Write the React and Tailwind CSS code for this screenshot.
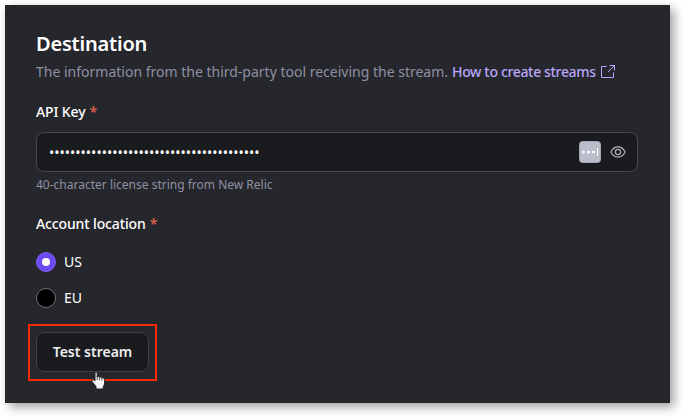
import React from "react";

function Label({ children, className }) {
  return (
    <div className={`flex h-5 gap-1 whitespace-nowrap text-sm leading-5 font-medium text-white ${className}`}>
      <span className="tracking-[-0.13px]">{children}</span>
      <span className="text-[#e2604f]">*</span>
    </div>
  );
}

function Radio({ label, checked, className }) {
  return (
    <div className={`flex h-5 items-center gap-2 ${className}`}>
      <span
        className={`flex size-5 items-center justify-center rounded-full border ${
          checked ? "border-[#7a5cf5] bg-[#6c4bf0]" : "border-[#70707c] bg-black"
        }`}
      >
        {checked && <span className="size-2 rounded-full bg-white" />}
      </span>
      <span className="text-sm leading-5 text-white">{label}</span>
    </div>
  );
}

function ExternalIcon() {
  return (
    <svg width="14" height="14" viewBox="0 0 14 14" fill="none" stroke="#b9a6fb" className="-mt-px shrink-0">
      <path d="M5.5 1.5H.5V12.5H12.5V7.5M7 7L13 1M8.5 .5H13.5V5.5" />
    </svg>
  );
}

function EyeIcon() {
  return (
    <svg width="16" height="12" viewBox="0 0 16 12" fill="none" stroke="#b4b4bd" strokeWidth="1.1">
      <path d="M.9 6C2.6 2.5 5 .9 8 .9S13.4 2.5 15.1 6C13.4 9.5 11 11.1 8 11.1S2.6 9.5 .9 6Z" />
      <circle cx="8" cy="6" r="2.6" />
    </svg>
  );
}

function ManagerIcon() {
  return (
    <svg width="22" height="22" viewBox="0 0 22 22">
      <rect x=".5" y=".5" width="21" height="21" rx="3" fill="#bcbdca" stroke="#a5a6b3" />
      <g fill="#fff">
        <circle cx="4.5" cy="11" r="1.5" />
        <circle cx="9.5" cy="11" r="1.5" />
        <circle cx="14.5" cy="11" r="1.5" />
        <rect x="18" y="7" width="1" height="8" />
      </g>
    </svg>
  );
}

function Pointer() {
  return (
    <svg width="15" height="19" viewBox="0 0 15 19" className="absolute left-[55px] top-[39px]">
      <path
        d="M4 2C4 .7 6.2 .7 6.2 2V6C6.8 5 8.3 5.3 8.5 6.4C9.2 5.6 10.7 5.9 10.9 7.1C11.8 6.6 13.6 7.1 13.6 8.5V13L12.2 15.8V18H5V15.6L1.1 10.6C.2 9.3 1.7 8.1 2.9 9L4 10Z"
        fill="#f5f5f6"
        stroke="#202126"
        strokeWidth="1"
      />
      <path d="M6.2 5.5V9M8.6 6.5V9.3M10.9 7.3V9.6" stroke="#202126" strokeWidth=".8" />
    </svg>
  );
}

export default function App() {
  return (
    <div className="h-[418px] w-[685px] overflow-hidden bg-white p-[5px] font-['Noto_Sans',sans-serif]">
      <main className="h-[398px] w-[665px] bg-[#26272c] pt-[25px] pr-8 pl-[31px] shadow-[4px_4px_10px_rgba(0,0,0,0.38)]">
        <h1 className="h-7 text-xl leading-7 font-semibold tracking-[-0.2px] text-white">Destination</h1>
        <div className="mt-1 flex h-5 items-center whitespace-nowrap text-sm leading-5 text-[#8e90a3]">
          <span>The information from the third-party tool receiving the stream.</span>
          <a className="ml-1 mr-[5px] w-36 font-medium tracking-[-0.34px] text-[#b9a6fb]">How to create streams</a>
          <ExternalIcon />
        </div>

        <Label className="mt-5">API Key</Label>
        <div className="mt-2.5 flex h-10 items-center rounded-lg border border-[#474852] bg-[#1a1b1f] pr-[11px] pl-3">
          <span className="flex-1 pt-0.5 text-sm leading-5 text-white">{"•".repeat(40)}</span>
          <span className="mr-[9px]">
            <ManagerIcon />
          </span>
          <EyeIcon />
        </div>
        <p className="mt-[5px] h-4 text-xs leading-4 text-[#8e90a3]">40-character license string from New Relic</p>

        <Label className="mt-[21px]">Account location</Label>
        <Radio label="US" checked className="mt-[18px]" />
        <Radio label="EU" className="mt-4" />

        <div className="relative mt-6 h-10 w-[113px]">
          <button className="h-10 w-[113px] whitespace-nowrap rounded-lg border border-[#3d3e47] bg-[#1a1b1f] text-sm leading-5 font-semibold text-[#ededf0]">
            Test stream
          </button>
          <div className="absolute -top-2 -left-2 h-[57px] w-[129px] border-2 border-[#f62a05]" />
          <Pointer />
        </div>
      </main>
    </div>
  );
}
